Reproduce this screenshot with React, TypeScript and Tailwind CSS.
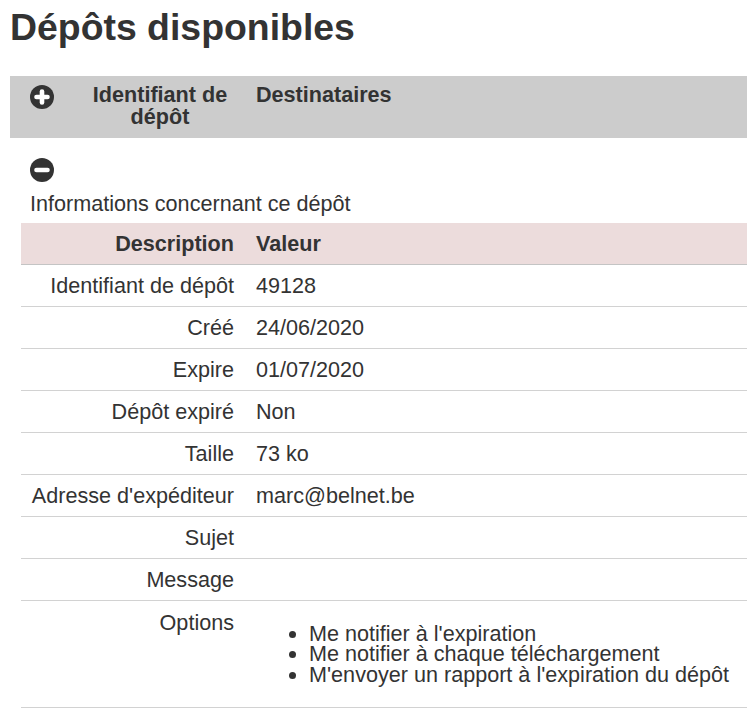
import React from 'react';

const rows: { label: string; value: string }[] = [
  { label: 'Identifiant de dépôt', value: '49128' },
  { label: 'Créé', value: '24/06/2020' },
  { label: 'Expire', value: '01/07/2020' },
  { label: 'Dépôt expiré', value: 'Non' },
  { label: 'Taille', value: '73 ko' },
  { label: "Adresse d'expéditeur", value: 'marc@belnet.be' },
  { label: 'Sujet', value: '' },
  { label: 'Message', value: '' },
];

const options = [
  "Me notifier à l'expiration",
  'Me notifier à chaque téléchargement',
  "M'envoyer un rapport à l'expiration du dépôt",
];

const CircleIcon = ({ plus }: { plus?: boolean }) => (
  <svg width="24" height="24" viewBox="0 0 24 24" className="block">
    <circle cx="12" cy="12" r="12" fill="#333333" />
    <line x1="6.5" y1="12" x2="17.5" y2="12" stroke="#fff" strokeWidth="4.6" strokeLinecap="round" />
    {plus && <line x1="12" y1="6.5" x2="12" y2="17.5" stroke="#fff" strokeWidth="4.6" strokeLinecap="round" />}
  </svg>
);

export default function App() {
  return (
    <div className="min-h-screen bg-white pl-[10px] pt-[6px] text-[#333333] font-['Liberation_Sans',Arial,sans-serif] overflow-hidden">
      <h1 className="text-[37.4px] leading-[42px] font-bold">Dépôts disponibles</h1>

      {/* collapsed list header */}
      <div className="mt-[28px] flex h-[62px] items-start bg-[#cccccc] text-[21.6px] font-bold leading-[22px]">
        <div className="w-[74px] pl-[20px] pt-[9px]">
          <CircleIcon plus />
        </div>
        <div className="w-[152px] pt-[8px] text-center">
          Identifiant de
          <br />
          dépôt
        </div>
        <div className="pl-[20px] pt-[8px]">Destinataires</div>
      </div>

      {/* expanded details */}
      <div className="pl-[20px] pt-[20px]">
        <CircleIcon />
        <div className="mt-[10px] text-[21.6px] leading-[24px]">Informations concernant ce dépôt</div>
      </div>

      <div className="ml-[11px] mt-[7px] text-[21.6px] leading-[24px]">
        <div className="flex h-[42px] items-center border-b border-[#c4c4c4] bg-[#ecdcdc] font-bold">
          <div className="w-[224px] pr-[11px] text-right">Description</div>
          <div className="pl-[11px]">Valeur</div>
        </div>
        {rows.map((r) => (
          <div key={r.label} className="flex h-[42px] items-center border-b border-[#d2d2d2]">
            <div className="w-[224px] pr-[11px] text-right">{r.label}</div>
            <div className="pl-[11px]">{r.value}</div>
          </div>
        ))}
        <div className="flex items-start border-b border-[#d2d2d2] pt-[10px]">
          <div className="w-[224px] pr-[11px] text-right">Options</div>
          <ul className="mb-[22px] mt-[13px] list-disc pl-[64px] leading-[20.3px]">
            {options.map((o) => (
              <li key={o}>{o}</li>
            ))}
          </ul>
        </div>
      </div>
    </div>
  );
}
